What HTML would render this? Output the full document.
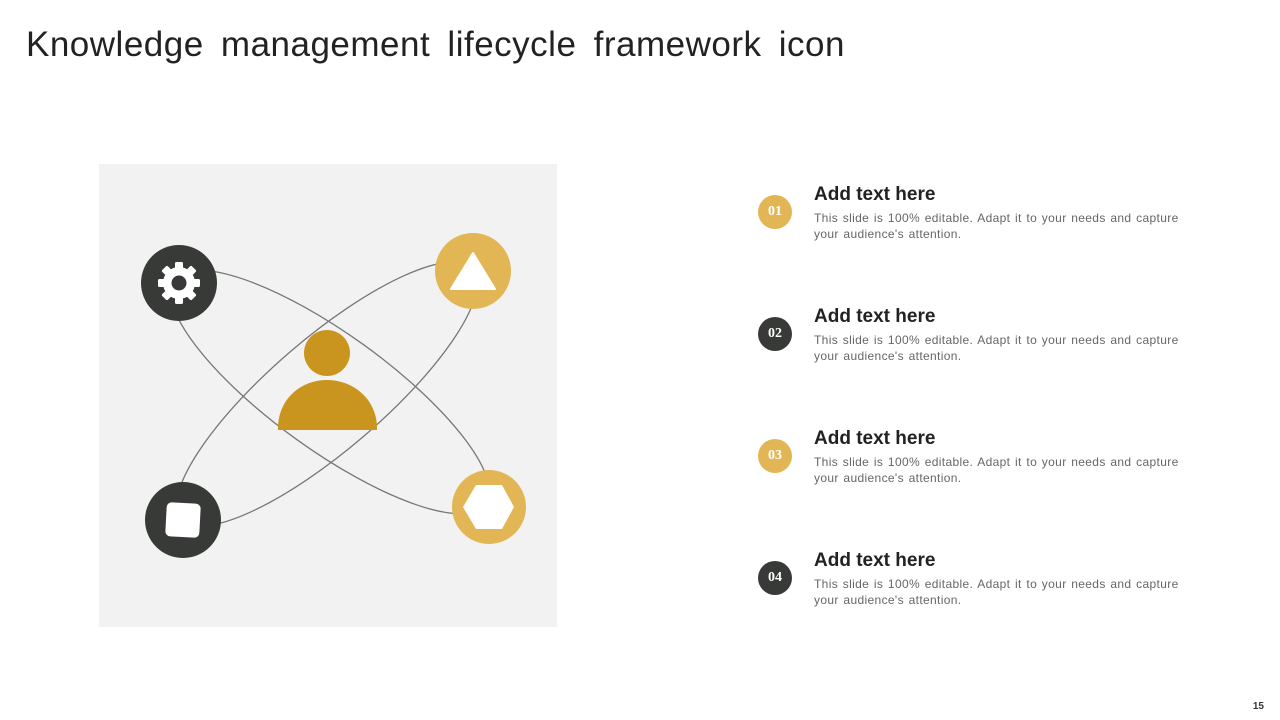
<!DOCTYPE html>
<html><head><meta charset="utf-8"><style>
body{margin:0;width:1280px;height:720px;background:#fff;position:relative;font-family:"Liberation Sans",sans-serif;overflow:hidden}
h1{position:absolute;left:26px;top:25px;margin:0;font-weight:normal;font-size:35px;color:#222;letter-spacing:0.5px;word-spacing:7px;white-space:nowrap}
.item{position:absolute;left:758px}
.num{position:absolute;left:0;width:34px;height:34px;border-radius:50%;color:#fff;font-family:"Liberation Serif",serif;font-weight:bold;font-size:14px;text-align:center;line-height:34px}
.t{position:absolute;left:56px;top:0;font-weight:bold;font-size:19px;color:#222;white-space:nowrap}
.d{position:absolute;left:56px;top:26px;width:372px;font-size:12px;line-height:16px;color:#666;word-spacing:1px;letter-spacing:0.35px}
.pg{position:absolute;right:16px;top:701px;font-size:10px;font-weight:bold;color:#333}
</style></head><body>
<h1>Knowledge management lifecycle framework icon</h1>
<svg width="1280" height="720" style="position:absolute;left:0;top:0">
<rect x="99" y="164" width="458" height="463" fill="#f2f2f2"/>
<g fill="none" stroke="#777" stroke-width="1.3">
<ellipse cx="330" cy="392" rx="192" ry="58" transform="rotate(35.8 330 392)"/>
<ellipse cx="327" cy="394" rx="192" ry="56" transform="rotate(-40.6 327 394)"/>
</g>
<circle cx="179" cy="283" r="38" fill="#383a38"/>
<g transform="translate(179 283)" fill="#fff">
<circle r="16"/>
<g id="tooth"><rect x="-4" y="-21" width="8" height="9" rx="1.5"/></g>
<use href="#tooth" transform="rotate(45)"/><use href="#tooth" transform="rotate(90)"/><use href="#tooth" transform="rotate(135)"/><use href="#tooth" transform="rotate(180)"/><use href="#tooth" transform="rotate(225)"/><use href="#tooth" transform="rotate(270)"/><use href="#tooth" transform="rotate(315)"/>
<circle r="7.5" fill="#383a38"/>
</g>
<circle cx="473" cy="271" r="38" fill="#e2b655"/>
<polygon points="473,253 495,289 451,289" fill="#fff" stroke="#fff" stroke-width="2" stroke-linejoin="round"/>
<circle cx="183" cy="520" r="38" fill="#383a38"/>
<rect x="166" y="503" width="34" height="34" rx="5" fill="#fff" transform="rotate(3 183 520)"/>
<circle cx="489" cy="507" r="37" fill="#e2b655"/>
<polygon points="476,485 502,485 514,507 502,529 476,529 463,507" fill="#fff"/>
<circle cx="327" cy="353" r="23" fill="#c9951e"/>
<path d="M278 428 C278 400 300 380 327 380 C354 380 377 400 377 428 L377 430 L278 430 Z" fill="#c9951e"/>
</svg>
<div class="item" style="top:184px"><div class="num" style="top:11px;background:#e2b655">01</div><div class="t">Add text here</div><div class="d">This slide is 100% editable. Adapt it to your needs and capture your audience's attention.</div></div>
<div class="item" style="top:306px"><div class="num" style="top:11px;background:#383a38">02</div><div class="t">Add text here</div><div class="d">This slide is 100% editable. Adapt it to your needs and capture your audience's attention.</div></div>
<div class="item" style="top:428px"><div class="num" style="top:11px;background:#e2b655">03</div><div class="t">Add text here</div><div class="d">This slide is 100% editable. Adapt it to your needs and capture your audience's attention.</div></div>
<div class="item" style="top:550px"><div class="num" style="top:11px;background:#383a38">04</div><div class="t">Add text here</div><div class="d">This slide is 100% editable. Adapt it to your needs and capture your audience's attention.</div></div>
<div class="pg">15</div>
</body></html>
